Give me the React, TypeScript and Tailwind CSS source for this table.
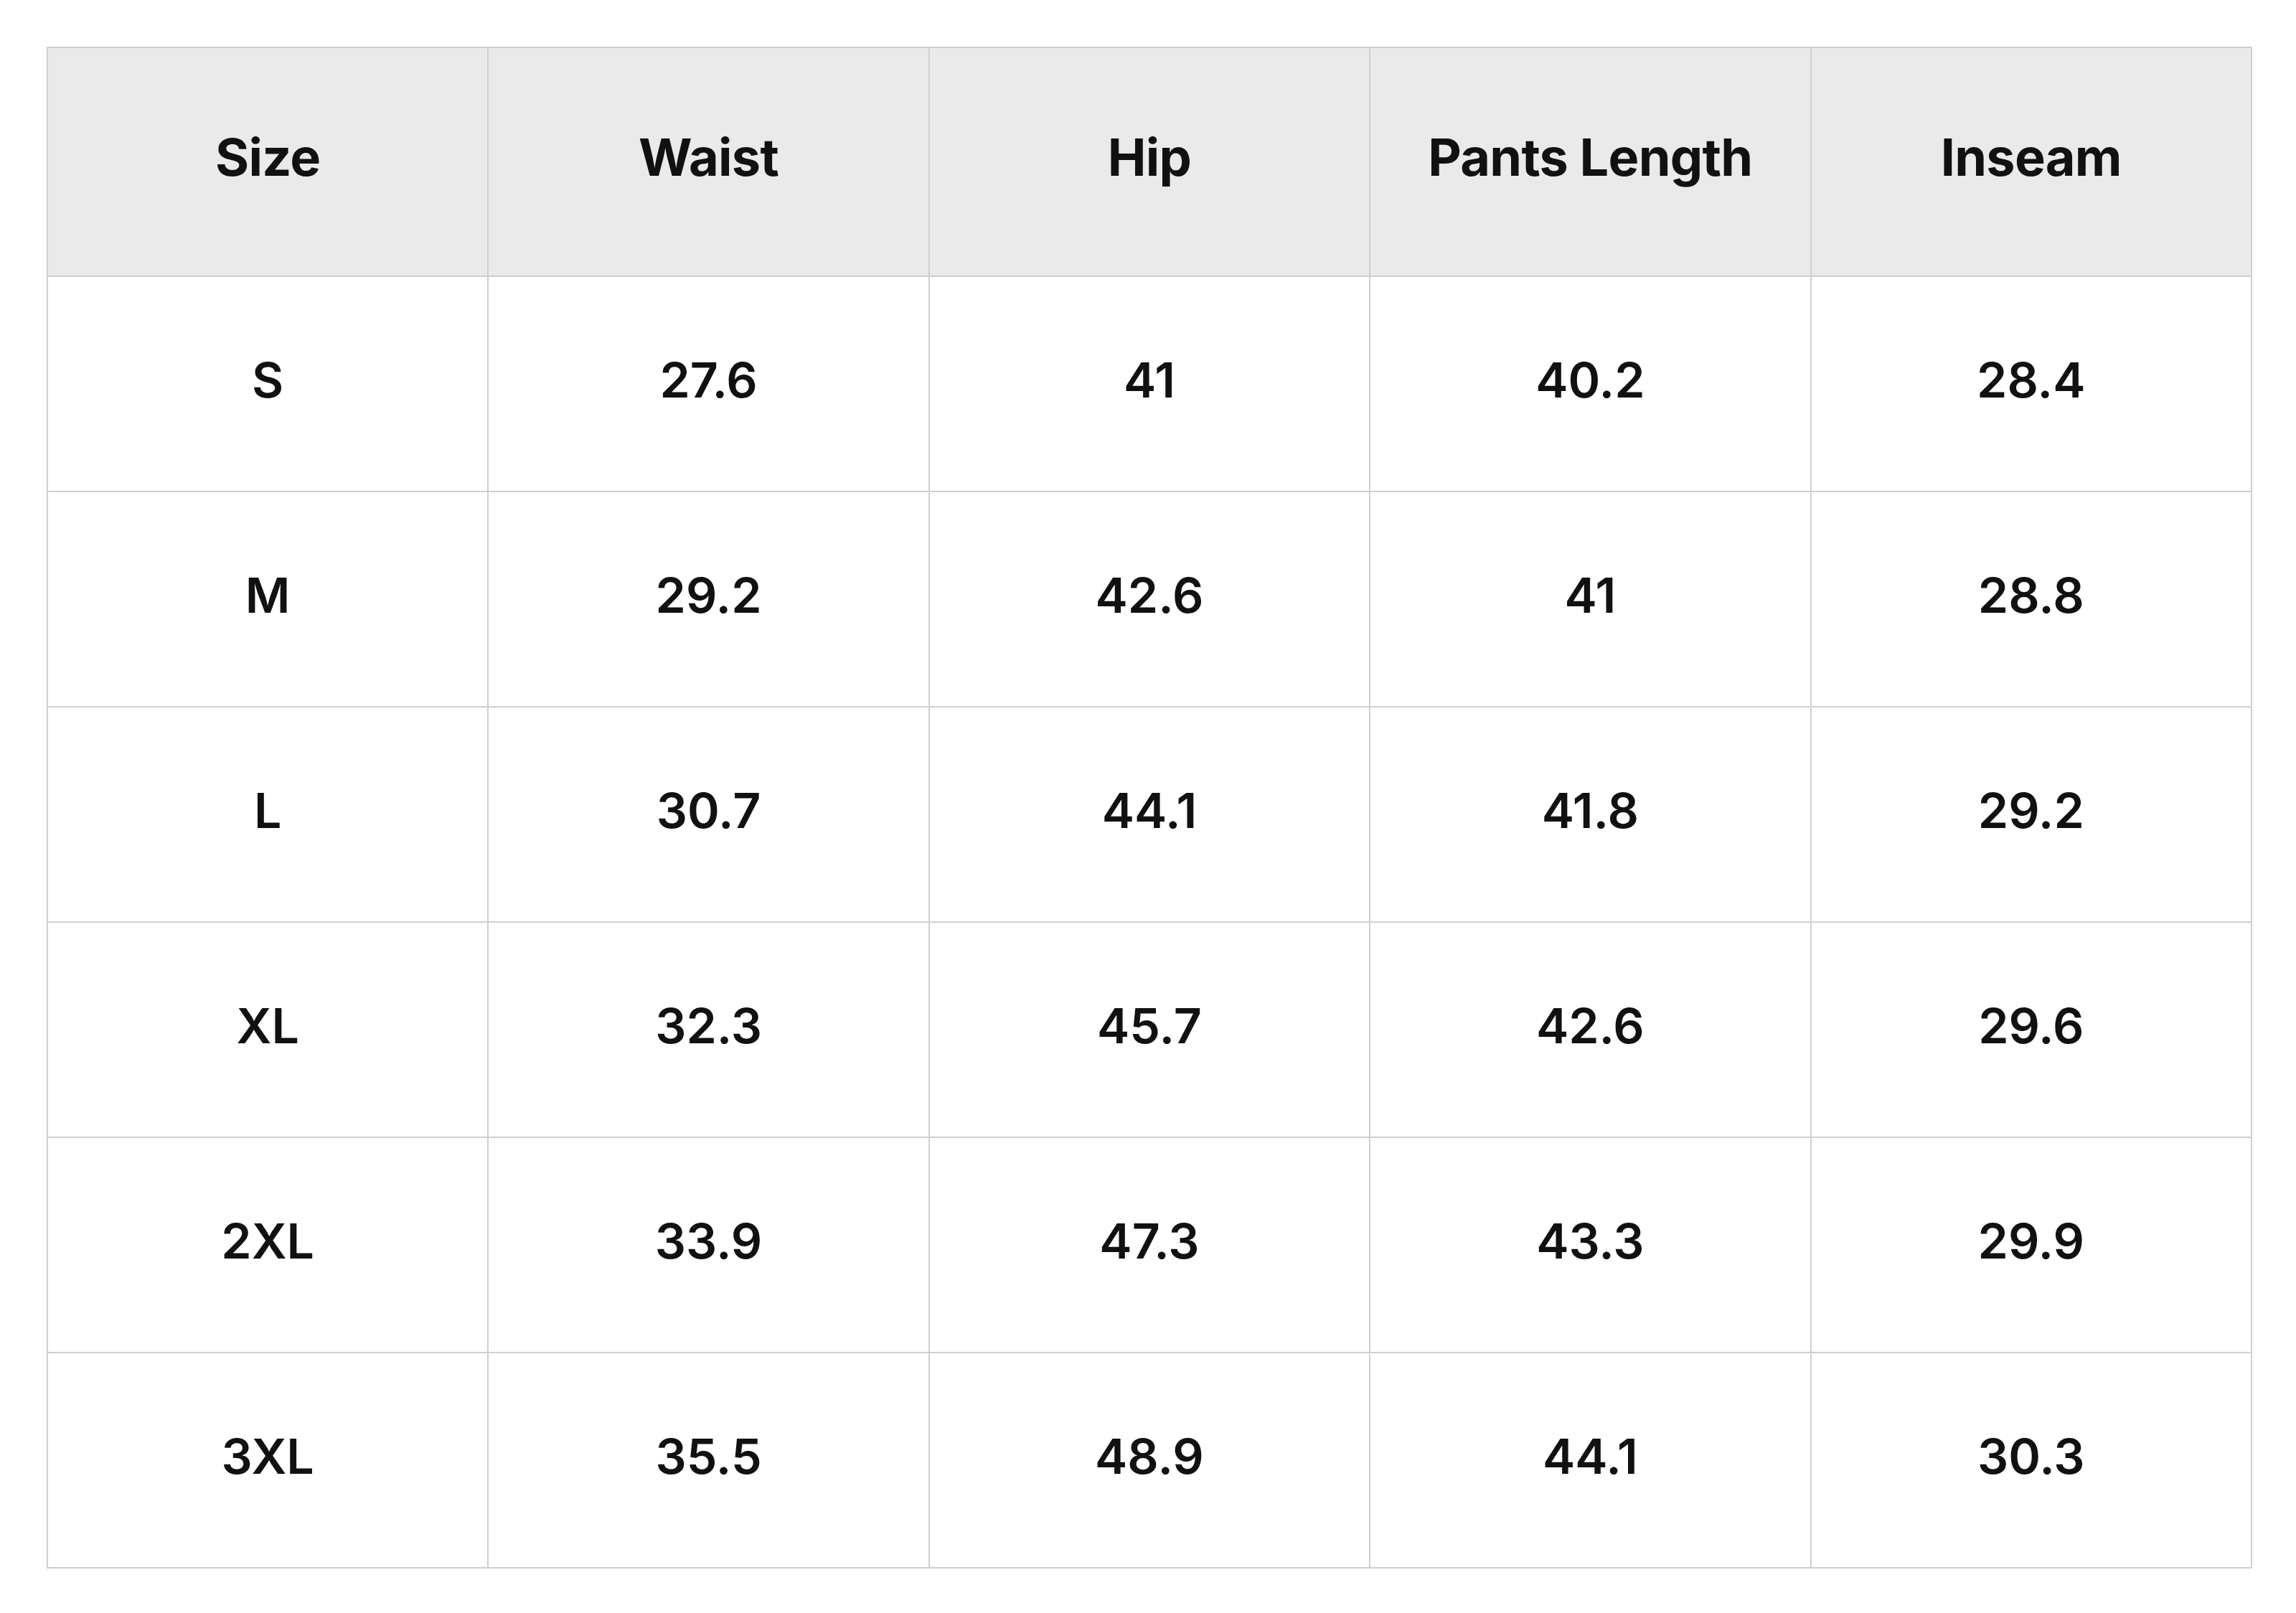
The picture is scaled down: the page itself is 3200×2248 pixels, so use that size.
import React from "react";

const headers = ["Size", "Waist", "Hip", "Pants Length", "Inseam"];

const rows = [
  ["S", "27.6", "41", "40.2", "28.4"],
  ["M", "29.2", "42.6", "41", "28.8"],
  ["L", "30.7", "44.1", "41.8", "29.2"],
  ["XL", "32.3", "45.7", "42.6", "29.6"],
  ["2XL", "33.9", "47.3", "43.3", "29.9"],
  ["3XL", "35.5", "48.9", "44.1", "30.3"],
];

const App: React.FC = () => {
  return (
    <div
      className="min-h-screen bg-white pl-[65px] pr-[61px] pt-[65px] pb-16"
      style={{ fontFamily: "Inter, 'Noto Sans', sans-serif" }}
    >
      <table className="w-full table-fixed border-collapse text-[#111111]">
        <thead>
          <tr className="bg-[#eaeaea]">
            {headers.map((h) => (
              <th
                key={h}
                className="h-[319px] border-2 border-[#cfcfcf] pb-[14px] text-center text-[72px] font-bold tracking-[-0.01em]"
              >
                {h}
              </th>
            ))}
          </tr>
        </thead>
        <tbody>
          {rows.map((row) => (
            <tr key={row[0]}>
              {row.map((cell, i) => (
                <td
                  key={i}
                  className="h-[300px] border-2 border-[#cfcfcf] pb-[12px] text-center text-[68px] font-semibold"
                >
                  {cell}
                </td>
              ))}
            </tr>
          ))}
        </tbody>
      </table>
    </div>
  );
};

export default App;
